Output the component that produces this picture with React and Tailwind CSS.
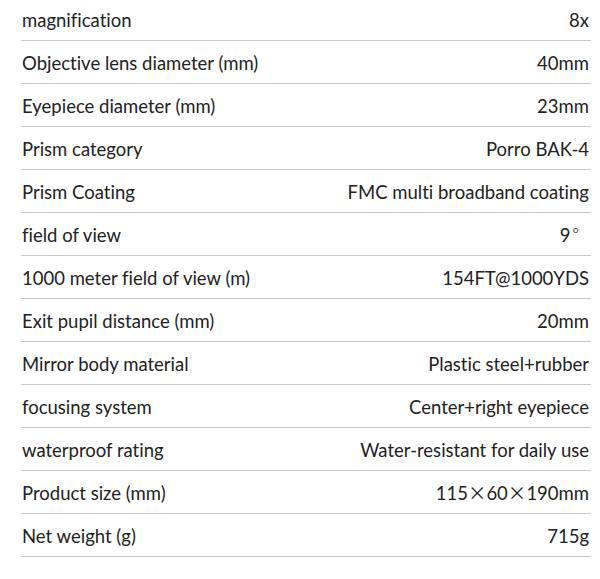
import React from 'react';

const cjk = "font-['Noto_Sans_CJK_SC',sans-serif]";

const specs = [
  ['magnification', '8x'],
  ['Objective lens diameter (mm)', '40mm'],
  ['Eyepiece diameter (mm)', '23mm'],
  ['Prism category', 'Porro BAK-4'],
  ['Prism Coating', 'FMC multi broadband coating'],
  ['field of view', <>9<span className={`${cjk} ml-[2px] mr-[10px] font-light`}>°</span></>],
  ['1000 meter field of view (m)', '154FT@1000YDS'],
  ['Exit pupil distance (mm)', '20mm'],
  ['Mirror body material', 'Plastic steel+rubber'],
  ['focusing system', 'Center+right eyepiece'],
  ['waterproof rating', 'Water-resistant for daily use'],
  [
    'Product size (mm)',
    <>115<span className={cjk}>×</span>60<span className={cjk}>×</span>190mm</>,
  ],
  ['Net weight (g)', '715g'],
];

const App = () => {
  return (
    <div className="w-[600px] h-[579px] bg-white overflow-hidden">
      <div className="ml-[21px] mr-[9px] -mt-[2px] font-['Lato',sans-serif] text-[18.5px] text-[#222222] [font-variant-ligatures:none]">
        {specs.map(([label, value]) => (
          <div
            key={label}
            className="h-[43px] flex items-center justify-between border-b border-[#c9c9c9] pt-[3px] pl-[1px] pr-[2px]"
          >
            <span>{label}</span>
            <span>{value}</span>
          </div>
        ))}
      </div>
    </div>
  );
};

export default App;
